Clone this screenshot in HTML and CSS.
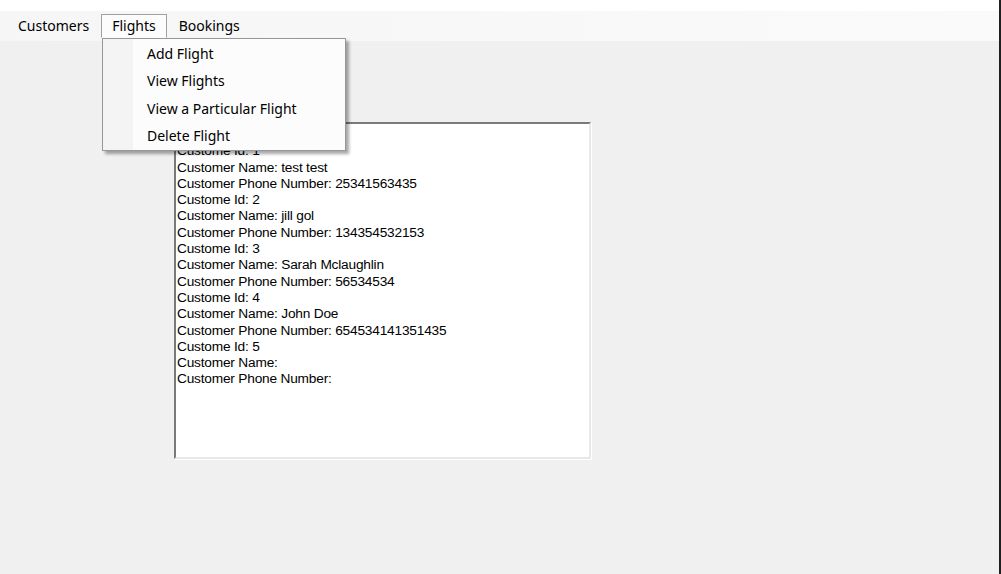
FILE: index.html
```html
<!DOCTYPE html>
<html>
<head>
<meta charset="utf-8">
<link rel="stylesheet" href="styles.css">
</head>
<body>
<div class="window">
  <div class="titlestrip"></div>
  <div class="menubar">
    <div class="menu-item first">Customers</div>
    <div class="menu-item open">Flights</div>
    <div class="menu-item">Bookings</div>
  </div>
  <div class="client">
    <div class="textbox">
      <div class="line">&nbsp;</div>
      <div class="line">Custome Id: 1</div>
      <div class="line">Customer Name: test test</div>
      <div class="line">Customer Phone Number: 25341563435</div>
      <div class="line">Custome Id: 2</div>
      <div class="line">Customer Name: jill gol</div>
      <div class="line">Customer Phone Number: 134354532153</div>
      <div class="line">Custome Id: 3</div>
      <div class="line">Customer Name: Sarah Mclaughlin</div>
      <div class="line">Customer Phone Number: 56534534</div>
      <div class="line">Custome Id: 4</div>
      <div class="line">Customer Name: John Doe</div>
      <div class="line">Customer Phone Number: 654534141351435</div>
      <div class="line">Custome Id: 5</div>
      <div class="line">Customer Name: </div>
      <div class="line">Customer Phone Number: </div>
    </div>
  </div>
  <div class="dropdown">
    <div class="gutter"></div>
    <div class="items">
      <div class="dd-item">Add Flight</div>
      <div class="dd-item">View Flights</div>
      <div class="dd-item">View a Particular Flight</div>
      <div class="dd-item">Delete Flight</div>
    </div>
  </div>
</div>
</body>
</html>
```
FILE: styles.css
```css
html, body {
  margin: 0;
  padding: 0;
  background: #f0f0f0;
}
.window {
  position: relative;
  width: 999px;
  height: 574px;
  border-right: 2px solid #1f1f1f;
  background: #f0f0f0;
  display: flex;
  flex-direction: column;
  overflow: hidden;
}
.titlestrip {
  height: 11px;
  background: #ffffff;
}
.menubar {
  height: 30px;
  background: linear-gradient(to right, #f6f6f6, #fafafa);
  display: flex;
  align-items: flex-start;
  padding-left: 7px;
  padding-top: 3px;
  box-sizing: border-box;
  font-family: "Noto Sans", "Open Sans", sans-serif;
  font-size: 14px;
  color: #000;
}
.menu-item {
  height: 24px;
  line-height: 22px;
  padding: 0 10px;
  border: 1px solid transparent;
  box-sizing: border-box;
  margin-right: 1px;
}
.menu-item.open {
  background: #fcfcfc;
  border-color: #a0a0a0;
  border-bottom-color: #fcfcfc;
}
.client {
  flex: 1;
  padding-left: 174px;
  padding-top: 81px;
}
.textbox {
  width: 417px;
  height: 337px;
  box-sizing: border-box;
  background: #ffffff;
  border-top: 2px solid #7a7a7a;
  border-left: 2px solid #7a7a7a;
  border-right: 2px solid #e8e8e8;
  border-bottom: 2px solid #e8e8e8;
  box-shadow: 1px 1px 0 #ffffff;
  padding: 3px 1px 0;
  font-family: "Liberation Sans", Arial, sans-serif;
  font-size: 13.7px;
  line-height: 16.3px;
  color: #000;
  letter-spacing: -0.2px;
}
.line {
  white-space: pre;
}
.dropdown {
  position: absolute;
  left: 102px;
  top: 38px;
  width: 244px;
  height: 113px;
  box-sizing: border-box;
  border: 1px solid #979797;
  background: #fcfcfc;
  box-shadow: 3px 3px 3px rgba(0, 0, 0, 0.35);
  display: flex;
  font-family: "Noto Sans", "Open Sans", sans-serif;
  font-size: 14px;
  color: #000;
}
.gutter {
  width: 30px;
  background: #f4f4f4;
}
.items {
  padding-top: 1px;
  flex: 1;
}
.dd-item {
  height: 27.4px;
  line-height: 27px;
  padding-left: 14px;
}
```
